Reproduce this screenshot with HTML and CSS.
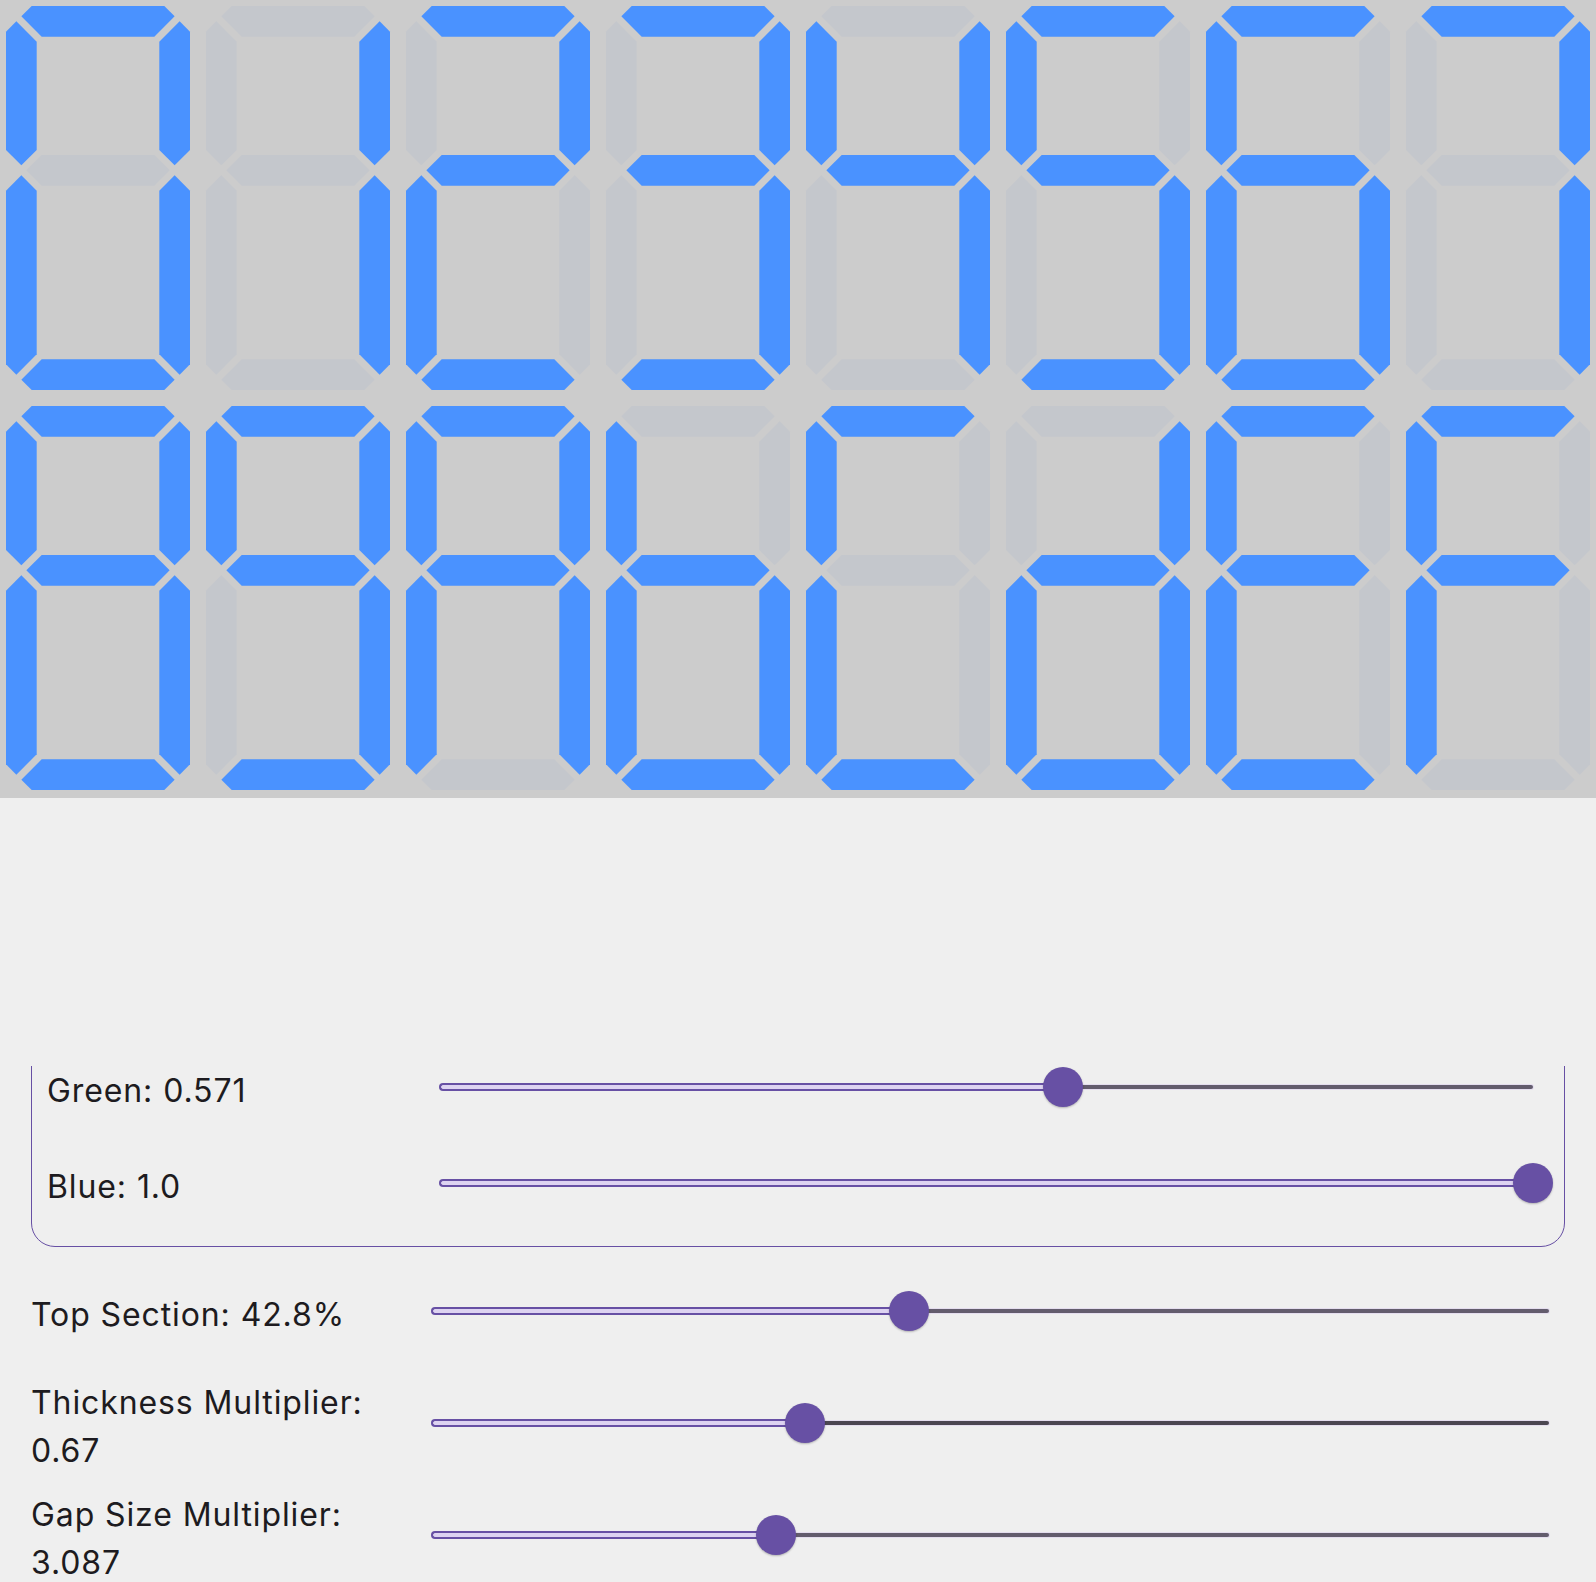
FILE: index.html
```html
<!DOCTYPE html>
<html lang="en">
<head>
    <meta charset="UTF-8">
    <meta name="viewport" content="width=device-width, initial-scale=1.0">
    <title>Seven Segment Display</title>
    <link rel="stylesheet" href="styles.css">
</head>
<body>
    <!-- Hex digits 0-F -->
    <div class="display">
        <svg id="digits" width="1596" height="798" viewBox="0 0 1596 798"></svg>
    </div>

    <div class="spacer"></div>

    <!-- Settings list (scrolled) -->
    <div class="controls">
        <div class="controls-inner">
            <div class="color-box">
                <div class="row">
                    <div class="label">Green: 0.571</div>
                    <div class="slider"><div class="track" style="--v: 57.1%"><div class="active"></div><div class="inactive"></div><div class="thumb"></div></div></div>
                </div>
                <div class="row">
                    <div class="label">Blue: 1.0</div>
                    <div class="slider"><div class="track" style="--v: 100%"><div class="active"></div><div class="inactive"></div><div class="thumb"></div></div></div>
                </div>
            </div>

            <div class="row">
                <div class="label">Top Section: 42.8%</div>
                <div class="slider"><div class="track" style="--v: 42.8%"><div class="active"></div><div class="inactive"></div><div class="thumb"></div></div></div>
            </div>
            <div class="row">
                <div class="label">Thickness Multiplier: 0.67</div>
                <div class="slider"><div class="track dark" style="--v: 33.5%"><div class="active"></div><div class="inactive"></div><div class="thumb"></div></div></div>
            </div>
            <div class="row">
                <div class="label">Gap Size Multiplier: 3.087</div>
                <div class="slider"><div class="track" style="--v: 30.87%"><div class="active"></div><div class="inactive"></div><div class="thumb"></div></div></div>
            </div>
        </div>
    </div>

    <script>
        // Digit geometry
        const W = 184, H = 384, T = 30.7, HT = T / 2, CY = 164.35, S = 5;
        const PITCH_X = 200, PITCH_Y = 400, OFFSET = 6;

        // horizontal segment between left apex l and right apex r
        function hSeg(l, r, y0, y1) {
            return [
                [l[0] + l[1] - y0, y0], [r[0] - r[1] + y0, y0], r,
                [r[0] + r[1] - y1, y1], [l[0] - l[1] + y1, y1], l
            ];
        }

        // vertical segment between top apex t and bottom apex b
        function vSeg(t, b, x0, x1) {
            return [
                t, [x1, t[1] - t[0] + x1], [x1, b[0] + b[1] - x1],
                b, [x0, b[1] - b[0] + x0], [x0, t[0] + t[1] - x0]
            ];
        }

        const SEGMENTS = {
            a: hSeg([HT, HT - S], [W - HT, HT - S], 0, T),
            g: hSeg([HT + S, CY], [W - HT - S, CY], CY - HT, CY + HT),
            d: hSeg([HT, H - HT + S], [W - HT, H - HT + S], H - T, H),
            f: vSeg([HT - S, HT], [HT, CY - S], 0, T),
            b: vSeg([W - HT + S, HT], [W - HT, CY - S], W - T, W),
            e: vSeg([HT, CY + S], [HT - S, H - HT], 0, T),
            c: vSeg([W - HT, CY + S], [W - HT + S, H - HT], W - T, W)
        };

        const DIGITS = [
            'abcdef', 'bc', 'abdeg', 'abcdg', 'bcfg', 'acdfg', 'acdefg', 'abc',
            'abcdefg', 'abcdfg', 'abcefg', 'cdefg', 'adef', 'bcdeg', 'adefg', 'aefg'
        ];

        const svg = document.getElementById('digits');
        const NS = 'http://www.w3.org/2000/svg';

        DIGITS.forEach((lit, i) => {
            const group = document.createElementNS(NS, 'g');
            const x = OFFSET + (i % 8) * PITCH_X;
            const y = OFFSET + Math.floor(i / 8) * PITCH_Y;
            group.setAttribute('transform', `translate(${x} ${y})`);

            Object.keys(SEGMENTS).forEach(name => {
                const poly = document.createElementNS(NS, 'polygon');
                poly.setAttribute('points', SEGMENTS[name].map(p => p.map(n => n.toFixed(2)).join(',')).join(' '));
                poly.setAttribute('class', lit.includes(name) ? 'seg-on' : 'seg-off');
                group.appendChild(poly);
            });

            svg.appendChild(group);
        });
    </script>
</body>
</html>
```

FILE: styles.css
```css
* {
    margin: 0;
    padding: 0;
    box-sizing: border-box;
}

body {
    width: 1596px;
    background-color: #efefef;
    color: #1d1b20;
    font-family: 'Inter', 'Noto Sans', sans-serif;
    overflow: hidden;
}

.display {
    height: 798px;
    background-color: #cccccc;
}

.display svg {
    display: block;
}

.seg-on {
    fill: #4a92ff;
}

.seg-off {
    fill: #c4c7cc;
}

.spacer {
    height: 268px;
}

/* list is scrolled so the colour box top sits above the fold */
.controls {
    height: 516px;
    overflow: hidden;
    padding: 0 31px;
}

.controls-inner {
    margin-top: -43px;
    display: flex;
    flex-direction: column;
    gap: 16px;
}

.color-box {
    border: 1px solid #6750a4;
    border-radius: 24px;
    padding: 15px;
}

.row {
    display: flex;
    align-items: center;
    height: 96px;
}

.label {
    flex: 1 1 0;
    min-width: 0;
    font-size: 32px;
    line-height: 48px;
    letter-spacing: 0.9px;
    padding-top: 7px;
}

.slider {
    flex: 3 1 0;
    min-width: 0;
    height: 96px;
    display: flex;
    align-items: center;
}

.track {
    position: relative;
    flex: 1;
    height: 8px;
    margin: 0 16px;
    display: flex;
    align-items: center;
}

.track .active {
    width: var(--v);
    height: 8px;
    border: 2px solid #6750a4;
    border-right: none;
    border-radius: 4px 0 0 4px;
    background-color: #ddd3f1;
}

.track .inactive {
    flex: 1;
    height: 4px;
    background-color: #635c6d;
    border-radius: 0 2px 2px 0;
    box-shadow: 0 0 0 1px #e4ddee;
}

.track.dark .inactive {
    background-color: #4b4651;
}

.track .thumb {
    position: absolute;
    left: var(--v);
    top: 50%;
    width: 40px;
    height: 40px;
    margin: -20px 0 0 -20px;
    border-radius: 50%;
    background-color: #6750a4;
    box-shadow: 0 1px 2px rgba(0, 0, 0, 0.25);
}
```
